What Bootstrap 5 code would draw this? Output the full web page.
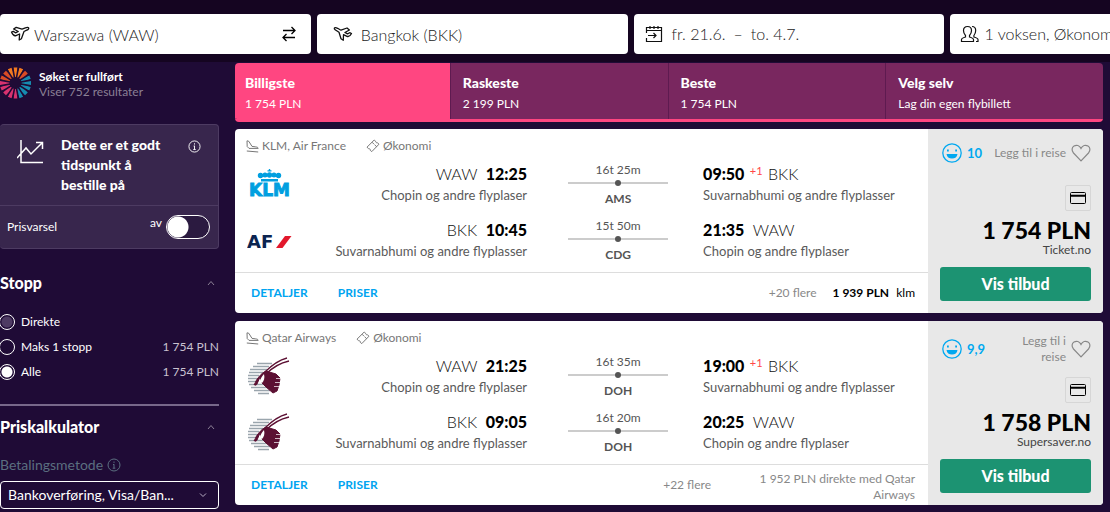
<!DOCTYPE html>
<html lang="no">
<head>
<meta charset="utf-8">
<meta name="viewport" content="width=device-width, initial-scale=1">
<title>Warszawa – Bangkok</title>
<link href="https://cdn.jsdelivr.net/npm/bootstrap@5.3.0/dist/css/bootstrap.min.css" rel="stylesheet">
<style>
body{font-family:Lato,"Open Sans",sans-serif;font-size:13px;line-height:16px;background:#1f0b36;color:#fff;overflow-x:hidden}
svg{flex:none;fill:none;stroke:currentColor}
button{line-height:inherit}
.search-bar{background:#150521;padding:14px 0 8px;gap:6px;overflow:hidden}
.search-field{flex:0 0 28%;height:40px;background:#fff;color:#111;border:0;border-radius:4px;font-size:16px;padding:0 14px 0 10px}
.search-field input{flex:1;min-width:0;border:0;padding:0;outline:0;background:none;color:#222;font-weight:300}
.soft{color:#222;font-weight:300}
.page-body{gap:16px;padding:1px 7px 0 0}
.filters{flex:0 0 219px}
.status{height:61px;gap:8px;padding-top:4px}
.status-text{padding-top:2px;font-size:12px;line-height:15px}
.fs-s{font-size:12px}
.dim{color:#8b8095}
.advice{background:#38264d;border:1px solid #4d3b62;border-left-width:0;border-radius:4px}
.advice-top{padding:11px 17px 9px;height:81px;border-bottom:1px solid #4d3b62}
.advice-top strong{font-size:14px;line-height:20px;font-weight:900;margin:-1px 0 0 17px}
.alert-row{height:42px;padding:0 8px 0 7px}
.form-switch .form-check-input.alert-toggle{width:44px;height:24px;margin:0;background-color:#2b1a40;border:1px solid #fff;background-image:radial-gradient(circle,#fff 0 10px,transparent 11px);background-size:22px 22px;background-position:0 center}
.filter-title{font-size:16px;line-height:20px;font-weight:900}
.stop-row{height:25px;gap:6px;font-size:12px}
.stop-row .form-check-input{width:16px;height:16px;margin:0 0 0 -1px;background:transparent;border:1px solid #fff;box-shadow:none}
.stop-row .form-check-input:checked{background:radial-gradient(circle,#fff 0 5px,transparent 6px)}
.stop-row .form-check-input:disabled{opacity:1;background:radial-gradient(circle,#4e3b63 0 5px,transparent 6px)}
.stop-price{color:#c9c2d0}
.rule{border-top:2px solid #77688a;margin:20px 0 11px}
.pay-label{font-size:14px;color:#5b6f80}
.pay-select{height:28px;background-color:transparent;color:#fff;border:1px solid #fff;border-radius:4px;font-size:14px;line-height:18px;padding:0 30px 0 7px;background-image:url("data:image/svg+xml,%3Csvg xmlns='http://www.w3.org/2000/svg' viewBox='0 0 16 16'%3E%3Cpath fill='none' stroke='%23b8aec4' stroke-width='2' d='m2 5 6 6 6-6'/%3E%3C/svg%3E");background-size:8px;background-position:right 11px center}
.sort-tabs{border-bottom:3px solid #ff4681;border-radius:4px;overflow:hidden;margin-bottom:7px}
.sort-tab{flex:1 1 0;height:56px;background:#79275f;color:#fff;border:0;border-left:1px solid #5e1a50;text-align:left;padding:0 10px 0 12px}
.sort-tab.active{background:#ff4681;border-left:0;padding-left:10px}
.sort-tab b{display:block;font-size:14px;line-height:18px;font-weight:900;margin:2px 0 5px}
.sort-tab span{display:block;font-size:12px;line-height:14px}
.offer{background:#fff;color:#000;border-radius:4px;overflow:hidden;margin-bottom:8px;height:184px}
.offer-meta{height:31px;padding:3px 11px 0;color:#777;gap:20px;font-size:12px}
.offer-meta span{display:flex;align-items:center;gap:3px}
.leg{display:grid;grid-template-columns:44px 21fr 176px 20fr;height:56px;padding-left:12px}
.leg-logo{padding-top:4px}
.leg-end{padding-top:4px;color:#5a5a5a;white-space:nowrap}
.leg-end p{margin:0 0 3px;font-size:16px;line-height:20px;color:#111;font-weight:300}
.leg-end b{color:#000;font-weight:900}
.leg-end sup{color:#ff4747;font-size:11px;font-weight:400;margin:0 1px}
.leg-mid{padding:2px 35px 0 41px;text-align:center;color:#555;font-size:12px}
.leg-line{height:2px;background:#ccc;margin:4px 0 7px;display:flex;justify-content:center;align-items:center}
.leg-line i{width:6px;height:6px;border-radius:50%;background:#555}
.offer-foot{height:41px;border-top:1px solid #ddd;padding:0 13px 0 16px;gap:16px;overflow:hidden;font-size:12px}
.foot-link{color:#00a4f0;font-weight:700;text-decoration:none;margin-right:14px}
.foot-note{color:#888;line-height:16px}
.direct{width:188px;height:29px;padding-left:28px;text-align:right}
.deal{flex:0 0 175px;background:#e8e8e8;padding:12px;text-align:right}
.rate{height:44px}
.score{height:24px;color:#00a8f0;padding-left:2px;gap:5px}
.save{min-height:24px;border:0;background:none;padding:0;color:#888;gap:5px;text-align:right;font-size:12px}
.two-line .score{height:32px}
.pay-card{width:26px;height:26px;border:1px solid #d6d6d6;border-radius:2px;color:#000}
.price{font-size:23px;line-height:26px;font-weight:900;margin-top:6px}
.seller{line-height:14px;color:#444;font-size:12px}
.go{background:#1c9372;color:#fff;border:0;border-radius:3px;width:100%;height:34px;font-size:16px;font-weight:900;margin-top:10px}
</style>
</head>
<body>
<svg width="0" height="0" class="position-absolute" aria-hidden="true">
<defs>
<symbol id="plane" viewBox="0 0 20 16"><path d="M1.500 6l1.800-.6L5.500 6.800l2.800-1.300L3.600 3l2.600-1.600L12 3.200l3.400-1.400c1.500-.5 3-.4 3.300.2.300.7-.8 1.700-2 2.200L14 5.500l-2.600 7.300-2.200 1.200.4-6-3.600 1.600C4 10.200 2.500 8.500 1.500 6z" stroke-width="1.300" stroke-linejoin="round"/></symbol>
<symbol id="takeoff" viewBox="0 0 13 13"><path d="M1 .8l1.800.5L6 6.400l3.800.5c1.500.2 2.400.7 2.400 1.500H3L1.200 6.500zM.8 11l11.400 1"/></symbol>
<symbol id="ticket" viewBox="0 0 14 14"><path d="M1 8.200L8.200 1 9.600 2.200c0 1 .7 1.700 1.800 1.600L13 5.200 5.800 12.600 4.300 11.400c.1-1.200-.6-1.900-1.800-1.800zM6 3.200l2 2M8.600 5.800l2.200 2"/></symbol>
<symbol id="smile" viewBox="0 0 20 20"><circle cx="10" cy="10" r="9.200" stroke-width="1.300"/><path d="M4.500 11h11c-.3 3-2.500 4.500-5.500 4.500S4.800 14 4.500 11z" fill="currentColor" stroke="none"/><path d="M5 7.500h1.800M13.200 7.500h1.800" stroke-width="1.800"/></symbol>
<symbol id="heart" viewBox="0 0 20 18"><path d="M10 16.800L2.500 9C.3 6.500.8 3.200 3 2c2.500-1.400 5.500-.6 7 2.400 1.500-3 4.500-3.800 7-2.400 2.200 1.200 2.700 4.500.5 7z" stroke-width="1.200"/></symbol>
<symbol id="credit" viewBox="0 0 18 14"><rect x="1.500" y="1.500" width="15" height="11" rx="1"/><path d="M1.500 4.800h15" stroke-width="2"/></symbol>
<symbol id="info" viewBox="0 0 14 14"><circle cx="7" cy="7" r="6"/><path d="M7 6.200v4M6 6.500h1M5.700 10.200h2.600M7 3.500v1.400"/></symbol>
<symbol id="up" viewBox="0 0 8 6"><path d="M1 5l3-3.500L7 5"/></symbol>
<symbol id="klm" viewBox="0 0 46 30"><g fill="#009fe0" stroke="none"><circle cx="13.500" cy="7.500" r="2.700"/><circle cx="18" cy="7" r="2.500"/><circle cx="22.500" cy="7" r="2.700"/><circle cx="27" cy="7" r="2.500"/><circle cx="31.500" cy="7.500" r="2.700"/><path d="M21.800 1h1.400v1.200h1.300v1.300h-4V2.200h1.300zM14 11h17v2.500H14z"/><text x="22.500" y="28" text-anchor="middle" font-family="DejaVu Sans,sans-serif" font-weight="700" font-size="17" stroke="#009fe0" stroke-width=".9">KLM</text></g></symbol>
<symbol id="airfrance" viewBox="0 0 46 16"><text x="0" y="14" font-family="DejaVu Sans,sans-serif" font-weight="700" font-size="18" fill="#0b2450" stroke="none">AF</text><path d="M29 14L38 2h6.500l-9 12z" fill="#e2182c" stroke="none"/></symbol>
<symbol id="qatar" viewBox="0 0 44 38"><g stroke="#9aa5ad" stroke-width="1.600"><path d="M10 6.500h15M6 9.500h16M3 12.500h17M2 15.500h14M1 18.500h11M1 21.500h9M1 24.500h8M2 27.500h16M4 30.500h16M7 33.500h16M11 36.500h11"/></g><g stroke="#5c1033"><path d="M18 15C24 9 32 3 40 1M19 17C26 10 33 6 42 4" stroke-width="1.300"/><path d="M8 27c0-3 6-11 11-13l10 3 4 4-1 7-2 6-4 2-7-6-4-4-2-6-3 7c-1 2-3 1-3 0z" fill="#5c1033"/><path d="M17 17c-2 2-4 5-4 8l2 1c2-2 3-5 2-9z" fill="#fff" stroke="none"/></g><path d="M29 21.500h5M28 25.500h6M27 29.500h6" stroke="#fff" stroke-width=".7"/></symbol>
</defs>
</svg>

<header class="search-bar d-flex">
  <div class="search-field d-flex align-items-center gap-1">
    <svg width="20" height="16"><use href="#plane"/></svg>
    <input type="text" aria-label="Fra" value="Warszawa (WAW)">
    <button class="btn p-0 border-0 d-flex text-black" aria-label="Bytt"><svg width="16" height="16" viewBox="0 0 16 16" stroke-width="1.300"><path d="M2 4.500h12M10.500 1L14 4.500 10.500 8M14 11.500H2M5.500 8L2 11.500 5.500 15"/></svg></button>
  </div>
  <div class="search-field d-flex align-items-center ps-3">
    <svg class="me-1" width="20" height="16" viewBox="0 0 20 16"><path d="M18.500 7.500l-1.800-.8-2.200 1.200-2.600-1.400L16.400 4 14 2 8 4.200 4.600 2.300C3 1.600 1.600 1.500 1.300 2.200c-.3.600.8 1.700 2 2.300L6 6.200l2 6.500 2.300 1.500.2-5.500 3.500 1.600c1.700.6 3.500-.8 4.500-2.800z" stroke-width="1.300" stroke-linejoin="round"/></svg>
    <input type="text" class="ms-1" aria-label="Til" value="Bangkok (BKK)">
  </div>
  <button class="search-field d-flex align-items-center">
    <svg width="20" height="18" viewBox="0 0 20 18" stroke-width="1.200"><path d="M2.500 8V2.500h15v14h-15V13M2.500 5.500h15M6 1v3M10 1v3M14 1v3M4 10.500h8M9.500 8l2.500 2.500L9.500 13"/></svg>
    <span class="ms-2 soft">fr. 21.6.</span><span class="mx-2 soft">–</span><span class="soft">to. 4.7.</span>
  </button>
  <button class="search-field d-flex align-items-center text-nowrap">
    <svg width="20" height="18" viewBox="0 0 20 18" stroke-width="1.200"><path d="M1.500 16.500v-2c0-1 1-1.500 4-2.500v-1.500C4 9 3.500 7.500 3.500 5.500 3.500 3 5 1.500 7.500 1.500s4 1.500 4 4c0 2-.5 3.500-2 5V12c3 1 4 1.500 4 2.500v2zM12 1.500c2.500 0 3.700 1.500 3.700 4 0 2-.6 3.500-1.800 5V12c3 1 4.100 1.500 4.100 2.500v2h-2"/></svg>
    <span class="ms-1 soft">1 voksen, Økonomi</span>
  </button>
</header>

<div class="page-body d-flex">
  <aside class="filters">
    <div class="status d-flex">
      <svg width="31" height="32" viewBox="0 0 32 32" stroke-width="4"><g><path stroke="#f47a20" d="M16 10V0M13.700 10.500L10 1M18.300 10.500L22 1"/><path stroke="#d94b26" d="M11.800 11.800L4.700 4.700M20.200 11.800l7.100-7.100M10.500 13.700L1 10"/><path stroke="#168cb0" d="M21.500 13.700L31 10M22 16h10M21.500 18.300L31 22M20.200 20.200l7.100 7.100M18.300 21.500L22 31"/><path stroke="#d8336f" d="M10 16H0M10.500 18.300L1 22M11.800 20.200l-7.100 7.100M13.700 21.500L10 31M16 22v10"/></g><g stroke="#1f0b36" stroke-width="1.600"><path d="M16 16L13 0M16 16L19 0M16 16L7 2M16 16L25 2M16 16L2 7M16 16L30 7M16 16L0 13M16 16L32 13M16 16L0 19M16 16L32 19M16 16L2 25M16 16L30 25M16 16L7 30M16 16L25 30M16 16L13 32M16 16L19 32"/></g><circle cx="16" cy="16" r="6" fill="#1f0b36" stroke="none"/></svg>
      <div class="status-text"><b>Søket er fullført</b><div class="dim">Viser 752 resultater</div></div>
    </div>
    <section class="advice">
      <div class="advice-top d-flex align-items-start">
        <svg class="mt-1" width="27" height="24" viewBox="0 0 27 24" stroke-width="1.500" stroke="#ddd"><path d="M4 0v22.500h22M0 18l9-10 5 6L25 3M19 2.500h6.500V9"/></svg>
        <strong class="flex-grow-1">Dette er et godt<br>tidspunkt å<br>bestille på</strong>
        <svg class="mt-1" width="13" height="13"><use href="#info"/></svg>
      </div>
      <div class="alert-row d-flex align-items-center">
        <label for="alert" class="me-auto fs-s">Prisvarsel</label><span class="me-1 pb-2 fs-s">av</span>
        <div class="form-switch p-0 m-0 d-flex"><input class="form-check-input alert-toggle float-none" type="checkbox" role="switch" id="alert"></div>
      </div>
    </section>
    <section class="pt-4">
      <h2 class="filter-title d-flex align-items-center justify-content-between mb-3 pe-1">Stopp<svg width="8" height="6" class="dim"><use href="#up"/></svg></h2>
      <div class="stop-row d-flex align-items-center"><input class="form-check-input" type="radio" name="stops" id="s0" disabled><label for="s0">Direkte</label></div>
      <div class="stop-row d-flex align-items-center"><input class="form-check-input" type="radio" name="stops" id="s1"><label for="s1">Maks 1 stopp</label><span class="ms-auto stop-price">1 754 PLN</span></div>
      <div class="stop-row d-flex align-items-center"><input class="form-check-input" type="radio" name="stops" id="s2" checked><label for="s2">Alle</label><span class="ms-auto stop-price">1 754 PLN</span></div>
    </section>
    <div class="rule"></div>
    <section>
      <h2 class="filter-title d-flex align-items-center justify-content-between mb-3 pe-1">Priskalkulator<svg width="8" height="6" class="dim"><use href="#up"/></svg></h2>
      <label for="pay" class="pay-label d-flex align-items-center gap-1 pt-1 mb-2">Betalingsmetode <svg width="14" height="14"><use href="#info"/></svg></label>
      <select id="pay" class="form-select pay-select"><option>Bankoverføring, Visa/Ban...</option></select>
    </section>
  </aside>

  <main class="flex-grow-1">
    <div class="sort-tabs d-flex">
      <button class="sort-tab active"><b>Billigste</b><span>1 754 PLN</span></button>
      <button class="sort-tab"><b>Raskeste</b><span>2 199 PLN</span></button>
      <button class="sort-tab"><b>Beste</b><span>1 754 PLN</span></button>
      <button class="sort-tab"><b>Velg selv</b><span>Lag din egen flybillett</span></button>
    </div>

    <article class="offer d-flex">
      <div class="flex-grow-1">
        <div class="offer-meta d-flex"><span><svg width="13" height="13"><use href="#takeoff"/></svg>KLM, Air France</span><span><svg width="14" height="14"><use href="#ticket"/></svg>Økonomi</span></div>
        <div class="leg">
          <div class="leg-logo pt-2"><svg width="46" height="30"><use href="#klm"/></svg></div>
          <div class="leg-end text-end"><p>WAW&nbsp; <b>12:25</b></p>Chopin og andre flyplaser</div>
          <div class="leg-mid">16t 25m<div class="leg-line"><i></i></div><b>AMS</b></div>
          <div class="leg-end"><p><b>09:50</b> <sup>+1</sup> BKK</p>Suvarnabhumi og andre flyplasser</div>
        </div>
        <div class="leg">
          <div class="leg-logo pt-3"><svg width="46" height="16"><use href="#airfrance"/></svg></div>
          <div class="leg-end text-end"><p>BKK&nbsp; <b>10:45</b></p>Suvarnabhumi og andre flyplasser</div>
          <div class="leg-mid">15t 50m<div class="leg-line"><i></i></div><b>CDG</b></div>
          <div class="leg-end"><p><b>21:35</b>&nbsp; WAW</p>Chopin og andre flyplaser</div>
        </div>
        <div class="offer-foot d-flex align-items-center"><a href="#" class="foot-link">DETALJER</a><a href="#" class="foot-link">PRISER</a><span class="foot-note ms-auto">+20 flere</span><span><b class="me-1">1 939 PLN</b> klm</span></div>
      </div>
      <div class="deal">
        <div class="rate d-flex justify-content-between align-items-start"><span class="score d-flex align-items-center"><svg width="20" height="20"><use href="#smile"/></svg><b>10</b></span><button class="save d-flex align-items-center">Legg til i reise<svg width="20" height="18"><use href="#heart"/></svg></button></div>
        <div class="d-flex justify-content-end"><span class="pay-card d-flex align-items-center justify-content-center"><svg width="18" height="14"><use href="#credit"/></svg></span></div>
        <div class="price">1 754 PLN</div><div class="seller">Ticket.no</div>
        <button class="go">Vis tilbud</button>
      </div>
    </article>

    <article class="offer d-flex">
      <div class="flex-grow-1">
        <div class="offer-meta d-flex"><span><svg width="13" height="13"><use href="#takeoff"/></svg>Qatar Airways</span><span><svg width="14" height="14"><use href="#ticket"/></svg>Økonomi</span></div>
        <div class="leg">
          <div class="leg-logo"><svg width="44" height="40"><use href="#qatar"/></svg></div>
          <div class="leg-end text-end"><p>WAW&nbsp; <b>21:25</b></p>Chopin og andre flyplaser</div>
          <div class="leg-mid">16t 35m<div class="leg-line"><i></i></div><b>DOH</b></div>
          <div class="leg-end"><p><b>19:00</b> <sup>+1</sup> BKK</p>Suvarnabhumi og andre flyplasser</div>
        </div>
        <div class="leg">
          <div class="leg-logo"><svg width="44" height="40"><use href="#qatar"/></svg></div>
          <div class="leg-end text-end"><p>BKK&nbsp; <b>09:05</b></p>Suvarnabhumi og andre flyplasser</div>
          <div class="leg-mid">16t 20m<div class="leg-line"><i></i></div><b>DOH</b></div>
          <div class="leg-end"><p><b>20:25</b>&nbsp; WAW</p>Chopin og andre flyplaser</div>
        </div>
        <div class="offer-foot d-flex align-items-center"><a href="#" class="foot-link">DETALJER</a><a href="#" class="foot-link">PRISER</a><span class="foot-note ms-auto">+22 flere</span><span class="foot-note direct">1 952 PLN direkte med Qatar Airways</span></div>
      </div>
      <div class="deal">
        <div class="rate two-line d-flex justify-content-between align-items-start"><span class="score d-flex align-items-center"><svg width="20" height="20"><use href="#smile"/></svg><b>9,9</b></span><button class="save d-flex align-items-center">Legg til i<br>reise<svg width="20" height="18"><use href="#heart"/></svg></button></div>
        <div class="d-flex justify-content-end"><span class="pay-card d-flex align-items-center justify-content-center"><svg width="18" height="14"><use href="#credit"/></svg></span></div>
        <div class="price">1 758 PLN</div><div class="seller">Supersaver.no</div>
        <button class="go">Vis tilbud</button>
      </div>
    </article>
  </main>
</div>
<script src="https://cdn.jsdelivr.net/npm/bootstrap@5.3.0/dist/js/bootstrap.bundle.min.js"></script>
</body>
</html>
